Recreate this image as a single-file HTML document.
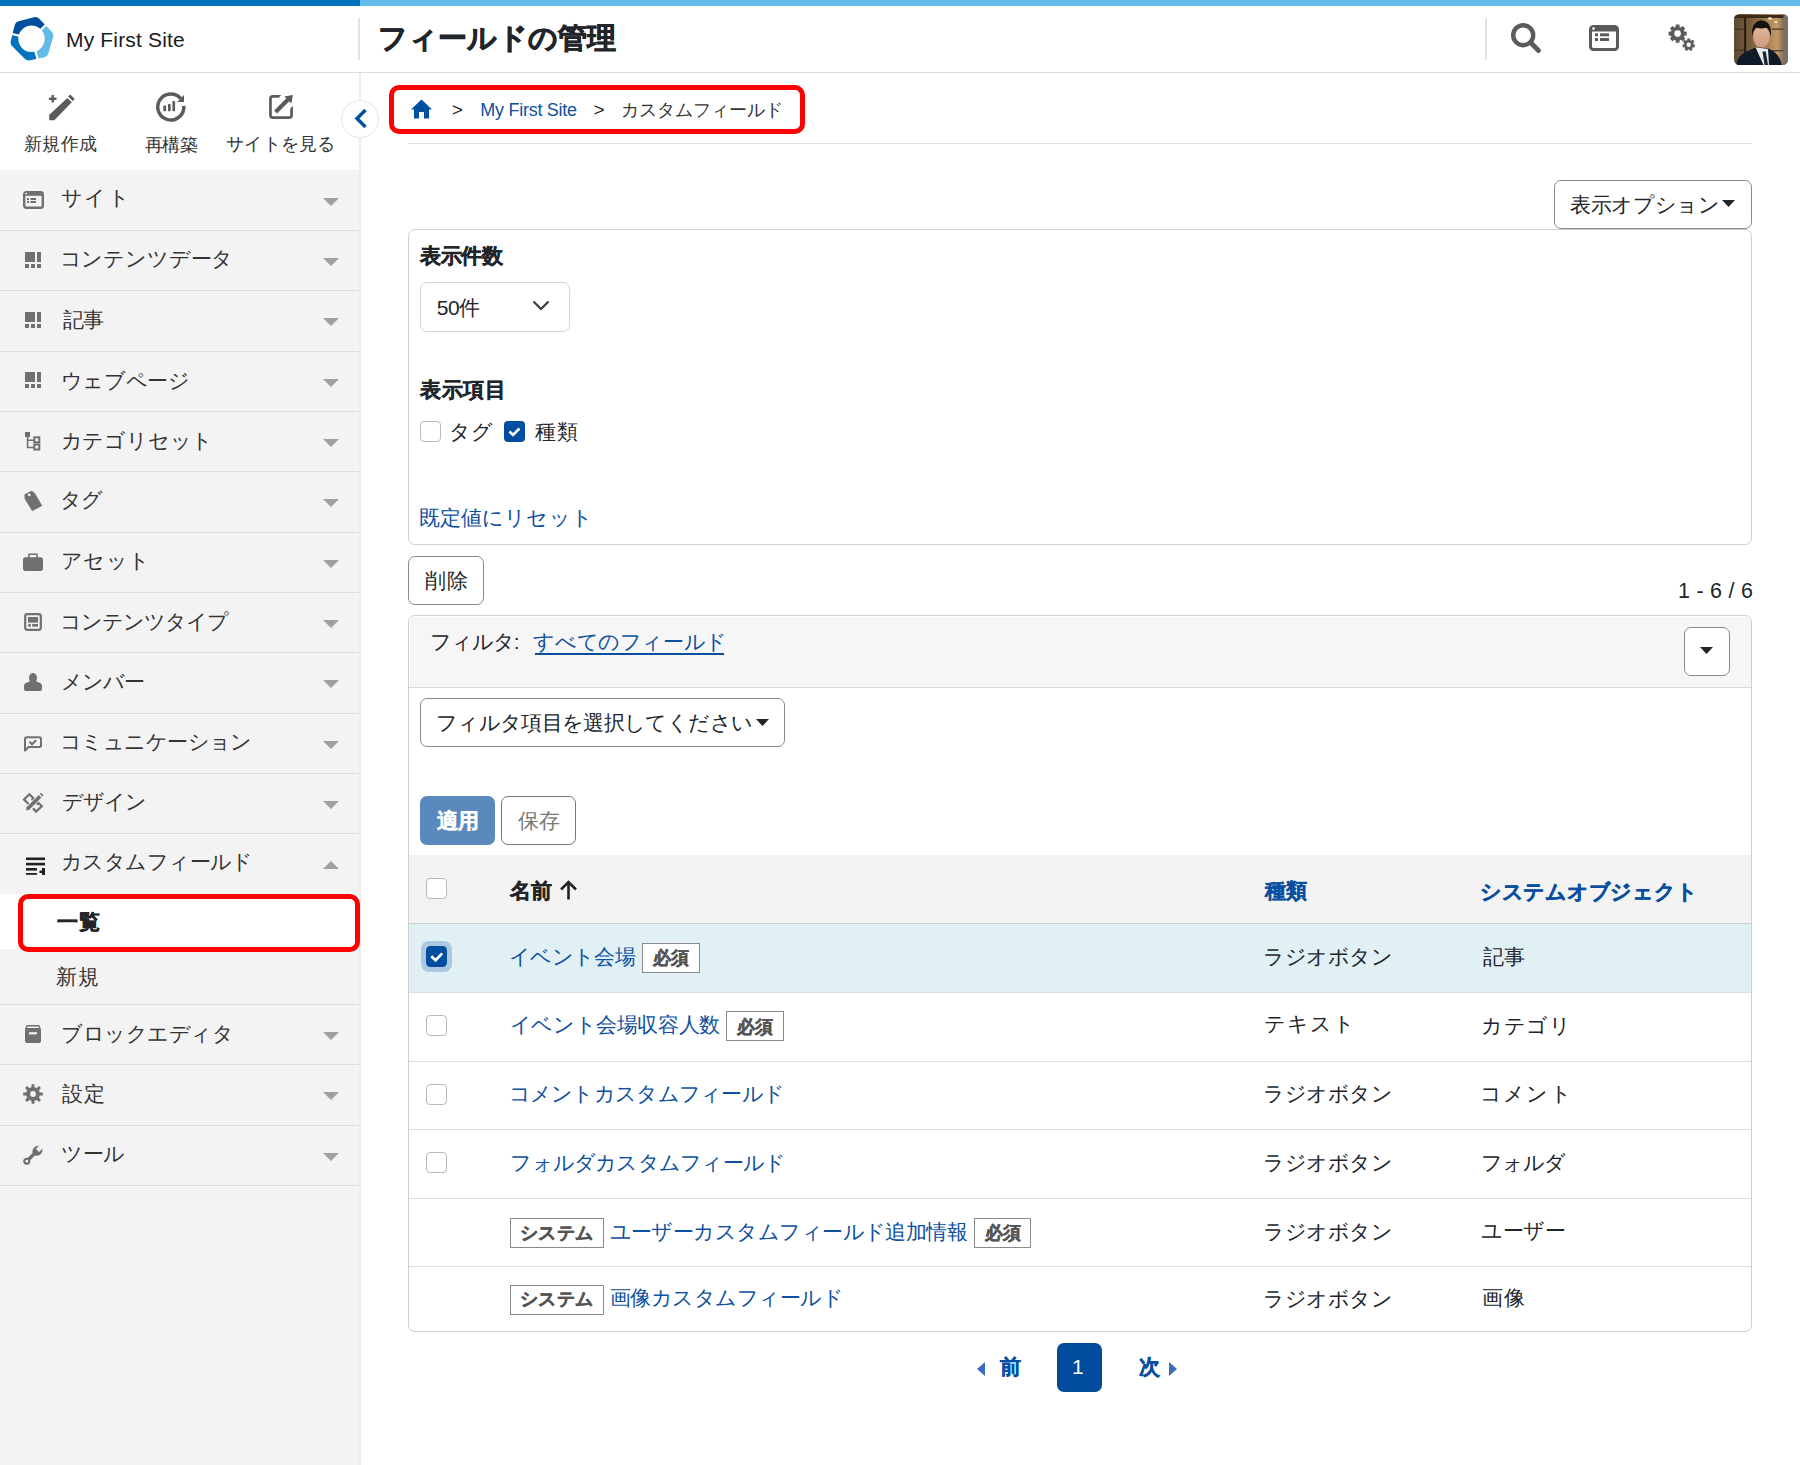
<!DOCTYPE html>
<html lang="ja"><head><meta charset="utf-8"><title>フィールドの管理</title>
<style>
html,body{margin:0;padding:0;}
body{width:1800px;height:1465px;overflow:hidden;position:relative;background:#fff;font-family:"Liberation Sans", sans-serif;}
.t{position:absolute;white-space:nowrap;}
.b{position:absolute;}
svg.b{overflow:visible;}
</style></head><body>
<div class="b" style="left:0px;top:0px;width:360px;height:6px;background:#0071bb"></div>
<div class="b" style="left:360px;top:0px;width:1440px;height:6px;background:#62bbe8"></div>
<svg class="b" style="left:0px;top:0px" width="60" height="70" viewBox="0 0 60 70"><defs><clipPath id="w1"><path d="M31.50,38.80 L-7.31,29.12 L-4.99,22.42 L-1.53,16.24 L2.97,10.76 L8.37,6.17 L14.49,2.60 L21.15,0.16 L28.13,-1.06 L35.22,-1.03 L42.19,0.25 L48.83,2.75 L54.92,6.37 L60.27,11.01 Z"/></clipPath><clipPath id="w2"><path d="M31.50,38.80 L60.27,11.01 L64.56,16.29 L67.90,22.21 L70.18,28.62 L71.35,35.31 L71.36,42.11 L70.23,48.82 L67.97,55.23 L64.66,61.17 L60.39,66.46 L55.29,70.95 L49.50,74.52 L43.19,77.05 Z"/></clipPath><clipPath id="w3"><path d="M31.50,38.80 L43.19,77.05 L36.32,78.51 L29.29,78.74 L22.33,77.74 L15.66,75.53 L9.47,72.19 L3.97,67.81 L-0.69,62.55 L-4.35,56.54 L-6.90,49.99 L-8.27,43.10 L-8.41,36.07 L-7.31,29.12 Z"/></clipPath></defs>
<path d="M12.26,46.26 Q10,44 10.78,40.90 L14.72,25.10 Q15.5,22 18.60,21.21 L33.90,17.29 Q37,16.5 39.23,18.80 L51.77,31.70 Q54,34 53.11,37.07 L48.39,53.43 Q47.5,56.5 44.37,57.19 L30.13,60.31 Q27,61 24.74,58.74 Z M44.7,38.8 A13.2,13.2 0 1,0 18.3,38.8 A13.2,13.2 0 1,0 44.7,38.8 Z" fill="#004ea0" fill-rule="evenodd" clip-path="url(#w1)"/>
<path d="M12.26,46.26 Q10,44 10.78,40.90 L14.72,25.10 Q15.5,22 18.60,21.21 L33.90,17.29 Q37,16.5 39.23,18.80 L51.77,31.70 Q54,34 53.11,37.07 L48.39,53.43 Q47.5,56.5 44.37,57.19 L30.13,60.31 Q27,61 24.74,58.74 Z M44.7,38.8 A13.2,13.2 0 1,0 18.3,38.8 A13.2,13.2 0 1,0 44.7,38.8 Z" fill="#62bbe9" fill-rule="evenodd" clip-path="url(#w2)"/>
<path d="M12.26,46.26 Q10,44 10.78,40.90 L14.72,25.10 Q15.5,22 18.60,21.21 L33.90,17.29 Q37,16.5 39.23,18.80 L51.77,31.70 Q54,34 53.11,37.07 L48.39,53.43 Q47.5,56.5 44.37,57.19 L30.13,60.31 Q27,61 24.74,58.74 Z M44.7,38.8 A13.2,13.2 0 1,0 18.3,38.8 A13.2,13.2 0 1,0 44.7,38.8 Z" fill="#0073bf" fill-rule="evenodd" clip-path="url(#w3)"/><line x1="38.69" y1="31.85" x2="50.20" y2="20.74" stroke="#fff" stroke-width="2.2"/><line x1="34.42" y1="48.36" x2="39.10" y2="63.66" stroke="#fff" stroke-width="2.2"/><line x1="21.80" y1="36.38" x2="6.27" y2="32.51" stroke="#fff" stroke-width="2.2"/></svg>
<div class="b" style="left:358px;top:18px;width:1.5px;height:42px;background:#e3e3e3"></div>
<div class="b" style="left:1485px;top:18px;width:2px;height:42px;background:#e3e3e3"></div>
<svg class="b" style="left:1510px;top:22px" width="33" height="33" viewBox="0 0 33 33"><circle cx="13.2" cy="13.2" r="10" fill="none" stroke="#5b5b5b" stroke-width="4.4"/><line x1="20.5" y1="20.5" x2="28.5" y2="28.5" stroke="#5b5b5b" stroke-width="4.8" stroke-linecap="round"/></svg>
<svg class="b" style="left:1589px;top:25px" width="30" height="26" viewBox="0 0 30 26"><rect x="1.5" y="1.5" width="27" height="23" rx="3" fill="none" stroke="#5b5b5b" stroke-width="3"/><rect x="1.5" y="1.5" width="27" height="5" fill="#5b5b5b"/><circle cx="4.5" cy="3.6" r="1.3" fill="#fff"/><rect x="6" y="8.3" width="3" height="3" fill="#5b5b5b"/><rect x="11" y="8.3" width="9" height="3" fill="#5b5b5b"/><rect x="6" y="13" width="3" height="3" fill="#5b5b5b"/><rect x="11" y="13" width="9" height="3" fill="#5b5b5b"/></svg>
<svg class="b" style="left:1666px;top:22px" width="32" height="32" viewBox="0 0 32 32"><path d="M9.82,2.57 L13.38,2.57 L13.70,4.92 L14.84,5.39 L16.72,3.96 L19.24,6.48 L17.81,8.36 L18.28,9.50 L20.63,9.82 L20.63,13.38 L18.28,13.70 L17.81,14.84 L19.24,16.72 L16.72,19.24 L14.84,17.81 L13.70,18.28 L13.38,20.63 L9.82,20.63 L9.50,18.28 L8.36,17.81 L6.48,19.24 L3.96,16.72 L5.39,14.84 L4.92,13.70 L2.57,13.38 L2.57,9.82 L4.92,9.50 L5.39,8.36 L3.96,6.48 L6.48,3.96 L8.36,5.39 L9.50,4.92 Z M14.90,11.6 A3.3,3.3 0 1,0 8.30,11.6 A3.3,3.3 0 1,0 14.90,11.6 Z" fill="#5b5b5b" fill-rule="evenodd"/><path d="M21.33,16.45 L24.07,16.45 L24.29,18.17 L25.25,18.64 L26.74,17.73 L28.44,19.87 L27.23,21.11 L27.47,22.16 L29.10,22.76 L28.49,25.42 L26.76,25.25 L26.09,26.09 L26.65,27.74 L24.18,28.93 L23.24,27.47 L22.16,27.47 L21.22,28.93 L18.75,27.74 L19.31,26.09 L18.64,25.25 L16.91,25.42 L16.30,22.76 L17.93,22.16 L18.17,21.11 L16.96,19.87 L18.66,17.73 L20.15,18.64 L21.11,18.17 Z M24.90,22.7 A2.2,2.2 0 1,0 20.50,22.7 A2.2,2.2 0 1,0 24.90,22.7 Z" fill="#5b5b5b" fill-rule="evenodd"/></svg>
<svg class="b" style="left:1734px;top:14px" width="54" height="51" viewBox="0 0 54 51"><defs><clipPath id="av"><rect x="0" y="0" width="54" height="51" rx="5.5"/></clipPath>
<linearGradient id="bg" x1="0" x2="1" y1="0" y2="0"><stop offset="0" stop-color="#5e4a34"/><stop offset="0.3" stop-color="#7a5c3c"/><stop offset="0.62" stop-color="#a98155"/><stop offset="0.8" stop-color="#c49a6a"/><stop offset="0.9" stop-color="#8e7658"/><stop offset="1" stop-color="#6f675f"/></linearGradient>
<linearGradient id="fc" x1="0" x2="0" y1="0" y2="1"><stop offset="0" stop-color="#e2b89c"/><stop offset="1" stop-color="#cf9a80"/></linearGradient></defs>
<g clip-path="url(#av)"><rect width="54" height="51" fill="url(#bg)"/>
<rect x="10" y="3" width="2.2" height="40" fill="#2c2015"/><rect x="0" y="1" width="54" height="3" fill="#3a2b1c"/>
<rect x="0" y="14.5" width="10" height="1.4" fill="#4a3825"/><rect x="38" y="14.5" width="12" height="1.4" fill="#5a4630"/>
<rect x="0" y="35.5" width="10" height="1.4" fill="#4a3825"/><rect x="38" y="36" width="12" height="1.4" fill="#5a4630"/>
<rect x="49.5" y="0" width="4.5" height="51" fill="#7a7066"/>
<ellipse cx="36" cy="4.5" rx="2" ry="1.3" fill="#f4e6c8"/><ellipse cx="42" cy="8" rx="1.6" ry="1.1" fill="#f4e6c8"/>
<ellipse cx="27.3" cy="22.5" rx="8.2" ry="11.2" fill="url(#fc)"/>
<path d="M18.3,23 Q16.5,7.5 27.5,6.3 Q38.5,7.5 36.8,23 Q36,15 32,13.8 Q27.5,15.2 22.5,13.8 Q19,15.5 18.3,23 Z" fill="#15120f"/>
<path d="M2,51 Q4,40 15,36.5 L22,33 L34,34.5 Q45,38 48,51 Z" fill="#111a29"/>
<path d="M21.5,33.2 L29.5,51 L35,51 L34,35 Z" fill="#e8ecef"/>
<path d="M28.5,37.5 L30.5,51 L34,51 L31.8,37.5 Z" fill="#1c2533"/></g></svg>
<div class="b" style="left:0px;top:72px;width:1800px;height:1px;background:#dddddd"></div>
<div class="b" style="left:0px;top:73px;width:359px;height:97px;background:#ffffff"></div>
<div class="b" style="left:0px;top:170px;width:359px;height:1295px;background:#f3f3f3"></div>
<div class="b" style="left:359px;top:73px;width:2px;height:1392px;background:#ececec"></div>
<svg class="b" style="left:47px;top:94px" width="30" height="28" viewBox="0 0 30 28"><path d="M2.2,21 L20.3,3.9 L24.8,8.3 L7.3,26.2 L2.2,26.2 Z" fill="#5b5b5b"/><path d="M21.1,2.6 L23.2,0.6 L27.8,5.1 L25.8,7.1 Z" fill="#5b5b5b"/><rect x="4.5" y="1" width="2.4" height="7.5" fill="#5b5b5b"/><rect x="1.9" y="3.6" width="7.6" height="2.4" fill="#5b5b5b"/></svg>
<svg class="b" style="left:155px;top:91px" width="32" height="32" viewBox="0 0 32 32"><path d="M28.8,14.9 A13.05,13.05 0 1,1 25.8,7.6" fill="none" stroke="#5b5b5b" stroke-width="3.5"/><path d="M22.2,11.1 L29,11.1 L29,4 Z" fill="#5b5b5b"/><rect x="8.3" y="14.4" width="2.8" height="5.9" rx="0.8" fill="#5b5b5b"/><rect x="13" y="13.1" width="2.7" height="7.2" rx="0.8" fill="#5b5b5b"/><rect x="17.4" y="10" width="2.7" height="10.3" rx="0.8" fill="#5b5b5b"/></svg>
<svg class="b" style="left:268px;top:94px" width="27" height="27" viewBox="0 0 27 27"><path d="M20,2.35 L4.8,2.35 Q2.45,2.35 2.45,4.7 L2.45,21.2 Q2.45,23.55 4.8,23.55 L21.2,23.55 Q23.55,23.55 23.55,21.2 L23.55,5" fill="none" stroke="#5b5b5b" stroke-width="2.7"/><path d="M15,-1 L28,-1 L28,8.8 L18,18.8 L7.5,7.5 Z" fill="#fff"/><path d="M7.6,17.9 L20.6,4.9" stroke="#5b5b5b" stroke-width="4.2"/><path d="M24.9,1.1 L23.4,9.6 L16.4,2.6 Z" fill="#5b5b5b"/></svg>
<div class="b" style="left:0px;top:230px;width:359px;height:1px;background:#dcdcdc"></div>
<div class="b" style="left:0px;top:290px;width:359px;height:1px;background:#dcdcdc"></div>
<div class="b" style="left:0px;top:351px;width:359px;height:1px;background:#dcdcdc"></div>
<div class="b" style="left:0px;top:411px;width:359px;height:1px;background:#dcdcdc"></div>
<div class="b" style="left:0px;top:471px;width:359px;height:1px;background:#dcdcdc"></div>
<div class="b" style="left:0px;top:532px;width:359px;height:1px;background:#dcdcdc"></div>
<div class="b" style="left:0px;top:592px;width:359px;height:1px;background:#dcdcdc"></div>
<div class="b" style="left:0px;top:652px;width:359px;height:1px;background:#dcdcdc"></div>
<div class="b" style="left:0px;top:713px;width:359px;height:1px;background:#dcdcdc"></div>
<div class="b" style="left:0px;top:773px;width:359px;height:1px;background:#dcdcdc"></div>
<div class="b" style="left:0px;top:833px;width:359px;height:1px;background:#dcdcdc"></div>
<div class="b" style="left:0px;top:1004px;width:359px;height:1px;background:#dcdcdc"></div>
<div class="b" style="left:0px;top:1064px;width:359px;height:1px;background:#dcdcdc"></div>
<div class="b" style="left:0px;top:1125px;width:359px;height:1px;background:#dcdcdc"></div>
<div class="b" style="left:0px;top:1185px;width:359px;height:1px;background:#dcdcdc"></div>
<svg class="b" style="left:23px;top:191px" width="21" height="18" viewBox="0 0 21 18"><rect x="1.2" y="1.2" width="18.6" height="15.6" rx="2" fill="none" stroke="#707070" stroke-width="2.4"/><rect x="1.2" y="1.2" width="18.6" height="3.6" fill="#707070"/><circle cx="3.2" cy="2.6" r="0.9" fill="#fff"/><rect x="4" y="7" width="2" height="2" fill="#707070"/><rect x="7.5" y="7" width="5.5" height="2" fill="#707070"/><rect x="4" y="10" width="2" height="2" fill="#707070"/><rect x="7.5" y="10" width="5.5" height="2" fill="#707070"/></svg>
<svg class="b" style="left:25px;top:252px" width="16" height="16" viewBox="0 0 16 16"><rect x="0" y="0" width="10" height="10" fill="#707070"/><rect x="12" y="0" width="4" height="10" fill="#707070"/><rect x="0" y="12" width="4" height="4" fill="#707070"/><rect x="6" y="12" width="4" height="4" fill="#707070"/><rect x="12" y="12" width="4" height="4" fill="#707070"/></svg>
<svg class="b" style="left:25px;top:312px" width="16" height="16" viewBox="0 0 16 16"><rect x="0" y="0" width="10" height="10" fill="#707070"/><rect x="12" y="0" width="4" height="10" fill="#707070"/><rect x="0" y="12" width="4" height="4" fill="#707070"/><rect x="6" y="12" width="4" height="4" fill="#707070"/><rect x="12" y="12" width="4" height="4" fill="#707070"/></svg>
<svg class="b" style="left:25px;top:372px" width="16" height="16" viewBox="0 0 16 16"><rect x="0" y="0" width="10" height="10" fill="#707070"/><rect x="12" y="0" width="4" height="10" fill="#707070"/><rect x="0" y="12" width="4" height="4" fill="#707070"/><rect x="6" y="12" width="4" height="4" fill="#707070"/><rect x="12" y="12" width="4" height="4" fill="#707070"/></svg>
<svg class="b" style="left:25px;top:432px" width="15" height="18" viewBox="0 0 15 18"><rect x="0" y="0" width="5" height="5" fill="#707070"/><path d="M2.6,4 L2.6,15.5 L9,15.5 M2.6,8.3 L9,8.3" fill="none" stroke="#707070" stroke-width="1.6"/><rect x="9.3" y="5.3" width="5" height="5" fill="none" stroke="#707070" stroke-width="2"/><rect x="9.3" y="12.5" width="5" height="5" fill="none" stroke="#707070" stroke-width="2"/></svg>
<svg class="b" style="left:24px;top:491px" width="19" height="21" viewBox="0 0 19 21"><path d="M0.8,3.6 L7.2,0.2 Q7.8,0 8.4,0.4 L10.6,2.2 L17.9,14.7 L8.3,19.8 L1,7.8 Z" fill="#707070" stroke="#707070" stroke-width="0.6" stroke-linejoin="round"/><circle cx="5.2" cy="3.9" r="1.3" fill="#f3f3f3"/></svg>
<svg class="b" style="left:23px;top:553px" width="20" height="18" viewBox="0 0 20 18"><rect x="0" y="4.3" width="20" height="13.7" rx="2.2" fill="#707070"/><path d="M6,5 L6,1.2 L14,1.2 L14,5" fill="none" stroke="#707070" stroke-width="1.6"/></svg>
<svg class="b" style="left:24px;top:613px" width="18" height="18" viewBox="0 0 18 18"><rect x="1.2" y="1.2" width="15.6" height="15.6" rx="2" fill="none" stroke="#707070" stroke-width="2.2"/><rect x="4" y="4" width="10" height="5.6" fill="#707070"/><circle cx="5.5" cy="12.3" r="1.5" fill="#707070"/><rect x="8.2" y="11" width="5.8" height="2.6" fill="#707070"/></svg>
<svg class="b" style="left:24px;top:673px" width="18" height="18" viewBox="0 0 18 18"><ellipse cx="9" cy="5" rx="4" ry="5" fill="#707070"/><path d="M0,13 Q0,10.5 3,9.5 L6.5,8 L11.5,8 L15,9.5 Q18,10.5 18,13 L18,16 Q18,18 16,18 L2,18 Q0,18 0,16 Z" fill="#707070"/></svg>
<svg class="b" style="left:24px;top:736px" width="18" height="16" viewBox="0 0 18 16"><path d="M1,14.5 L1,3 Q1,1.2 3,1.2 L15,1.2 Q17,1.2 17,3 L17,9.5 Q17,11 15,11 L4.5,11 Z" fill="none" stroke="#707070" stroke-width="2" stroke-linejoin="round"/><path d="M5.5,5.8 L8,8.3 L12.2,4.2" fill="none" stroke="#707070" stroke-width="2"/></svg>
<svg class="b" style="left:23px;top:793px" width="20" height="20" viewBox="0 0 20 20"><path d="M5.5,11 L1,6.5 L6.4,1.2 L10.6,5.4 L8.6,7.3" fill="none" stroke="#707070" stroke-width="2.2"/><path d="M10,15.2 L13,18.6 L18.8,13.2 L15.2,9.8 L13.5,11.6" fill="none" stroke="#707070" stroke-width="2.2"/><path d="M3.2,17.5 L3.6,14.2 L15.8,2 L18.4,4.6 L6.2,16.8 Z" fill="#707070" stroke="#f3f3f3" stroke-width="1.4" paint-order="stroke"/><path d="M16.8,1 L18,-0.2 L20.6,2.4 L19.4,3.6 Z" fill="#707070"/></svg>
<svg class="b" style="left:26px;top:857px" width="19" height="18" viewBox="0 0 19 18"><rect x="0" y="0.5" width="19" height="2.6" fill="#222"/><rect x="0" y="5.8" width="19" height="2.6" fill="#222"/><rect x="0" y="11" width="11" height="2.6" fill="#222"/><rect x="0" y="16" width="11" height="1.8" fill="#222"/><rect x="16" y="11" width="3" height="7" fill="#222"/><rect x="13.5" y="13.5" width="3" height="2.5" fill="#222"/></svg>
<svg class="b" style="left:25px;top:1025px" width="16" height="18" viewBox="0 0 16 18"><path d="M2.2,0.8 L13.8,0.8 L15.2,3.8 L0.8,3.8 Z" fill="none" stroke="#707070" stroke-width="1.4"/><rect x="0" y="3.8" width="16" height="14.2" rx="2" fill="#707070"/><rect x="4" y="7.2" width="8" height="2.2" fill="#f3f3f3"/></svg>
<svg class="b" style="left:23px;top:1084px" width="20" height="20" viewBox="0 0 20 20"><path d="M8.61,0.20 L11.39,0.20 L11.53,3.17 L13.74,4.09 L15.94,2.08 L17.92,4.06 L15.91,6.26 L16.83,8.47 L19.80,8.61 L19.80,11.39 L16.83,11.53 L15.91,13.74 L17.92,15.94 L15.94,17.92 L13.74,15.91 L11.53,16.83 L11.39,19.80 L8.61,19.80 L8.47,16.83 L6.26,15.91 L4.06,17.92 L2.08,15.94 L4.09,13.74 L3.17,11.53 L0.20,11.39 L0.20,8.61 L3.17,8.47 L4.09,6.26 L2.08,4.06 L4.06,2.08 L6.26,4.09 L8.47,3.17 Z M12.90,10 A2.9,2.9 0 1,0 7.10,10 A2.9,2.9 0 1,0 12.90,10 Z" fill="#707070" fill-rule="evenodd"/></svg>
<svg class="b" style="left:23px;top:1145px" width="20" height="20" viewBox="0 0 20 20"><path d="M3.5,16.5 L12,8" stroke="#707070" stroke-width="3.2" stroke-linecap="round"/><circle cx="3.8" cy="16.2" r="3.5" fill="#707070"/><circle cx="3.8" cy="16.2" r="1.4" fill="#f3f3f3"/><path d="M9.5,7.5 A6,6 0 0,1 16,0.8 L13,4 L16,7 L19.5,3.8 A6,6 0 0,1 12,10.5 Z" fill="#707070"/></svg>
<svg class="b" style="left:323px;top:198px" width="16" height="9" viewBox="0 0 16 9"><path d="M0,0 L16,0 L8,8 Z" fill="#a0a0a0"/></svg>
<svg class="b" style="left:323px;top:258px" width="16" height="9" viewBox="0 0 16 9"><path d="M0,0 L16,0 L8,8 Z" fill="#a0a0a0"/></svg>
<svg class="b" style="left:323px;top:318px" width="16" height="9" viewBox="0 0 16 9"><path d="M0,0 L16,0 L8,8 Z" fill="#a0a0a0"/></svg>
<svg class="b" style="left:323px;top:379px" width="16" height="9" viewBox="0 0 16 9"><path d="M0,0 L16,0 L8,8 Z" fill="#a0a0a0"/></svg>
<svg class="b" style="left:323px;top:439px" width="16" height="9" viewBox="0 0 16 9"><path d="M0,0 L16,0 L8,8 Z" fill="#a0a0a0"/></svg>
<svg class="b" style="left:323px;top:499px" width="16" height="9" viewBox="0 0 16 9"><path d="M0,0 L16,0 L8,8 Z" fill="#a0a0a0"/></svg>
<svg class="b" style="left:323px;top:560px" width="16" height="9" viewBox="0 0 16 9"><path d="M0,0 L16,0 L8,8 Z" fill="#a0a0a0"/></svg>
<svg class="b" style="left:323px;top:620px" width="16" height="9" viewBox="0 0 16 9"><path d="M0,0 L16,0 L8,8 Z" fill="#a0a0a0"/></svg>
<svg class="b" style="left:323px;top:680px" width="16" height="9" viewBox="0 0 16 9"><path d="M0,0 L16,0 L8,8 Z" fill="#a0a0a0"/></svg>
<svg class="b" style="left:323px;top:741px" width="16" height="9" viewBox="0 0 16 9"><path d="M0,0 L16,0 L8,8 Z" fill="#a0a0a0"/></svg>
<svg class="b" style="left:323px;top:801px" width="16" height="9" viewBox="0 0 16 9"><path d="M0,0 L16,0 L8,8 Z" fill="#a0a0a0"/></svg>
<svg class="b" style="left:323px;top:861px" width="16" height="9" viewBox="0 0 16 9"><path d="M0,8 L8,0 L16,8 Z" fill="#a0a0a0"/></svg>
<svg class="b" style="left:323px;top:1032px" width="16" height="9" viewBox="0 0 16 9"><path d="M0,0 L16,0 L8,8 Z" fill="#a0a0a0"/></svg>
<svg class="b" style="left:323px;top:1092px" width="16" height="9" viewBox="0 0 16 9"><path d="M0,0 L16,0 L8,8 Z" fill="#a0a0a0"/></svg>
<svg class="b" style="left:323px;top:1153px" width="16" height="9" viewBox="0 0 16 9"><path d="M0,0 L16,0 L8,8 Z" fill="#a0a0a0"/></svg>
<div class="b" style="left:0px;top:894px;width:359px;height:55px;background:#ffffff"></div>
<div class="b" style="left:18px;top:894px;width:342px;height:58px;border:5px solid #ff0000;border-radius:10px;box-sizing:border-box"></div>
<div class="b" style="left:341px;top:100px;width:38px;height:38px;background:#fff;border:1.5px solid #e6e6e6;border-radius:50%;box-sizing:border-box"></div>
<svg class="b" style="left:353px;top:108px" width="16" height="21" viewBox="0 0 16 21"><path d="M12.5,2 L4,10.5 L12.5,19" fill="none" stroke="#004ea0" stroke-width="3.4"/></svg>
<svg class="b" style="left:410px;top:99px" width="23" height="21" viewBox="0 0 23 21"><path d="M11.5,0.5 L22,10.5 L19,10.5 L19,19.5 L14,19.5 L14,13 L9,13 L9,19.5 L4,19.5 L4,10.5 L1,10.5 Z" fill="#004ea0"/></svg>
<div class="b" style="left:389px;top:85px;width:416px;height:49px;border:5px solid #ff0000;border-radius:10px;box-sizing:border-box"></div>
<div class="b" style="left:408px;top:143px;width:1344px;height:1px;background:#e0e0e0"></div>
<div class="b" style="left:408px;top:229px;width:1344px;height:316px;border:1.5px solid #cfcfcf;border-radius:7px;box-sizing:border-box"></div>
<div class="b" style="left:1554px;top:180px;width:198px;height:49px;border:1.5px solid #8a8a8a;border-radius:7px;box-sizing:border-box;background:#fff"></div>
<svg class="b" style="left:1722px;top:200px" width="14" height="8" viewBox="0 0 14 8"><path d="M0,0 L13,0 L6.5,7 Z" fill="#212529"/></svg>
<div class="b" style="left:420px;top:282px;width:150px;height:50px;border:1.5px solid #ced4da;border-radius:7px;box-sizing:border-box;background:#fff"></div>
<svg class="b" style="left:532px;top:300px" width="18" height="12" viewBox="0 0 18 12"><path d="M1.5,1.5 L9,9 L16.5,1.5" fill="none" stroke="#343a40" stroke-width="2.2"/></svg>
<div class="b" style="left:420px;top:421px;width:21px;height:21px;border:1.5px solid #b9b9b9;border-radius:4px;box-sizing:border-box;background:#fff"></div>
<div class="b" style="left:504px;top:421px;width:21px;height:21px;background:#004ea0;border-radius:4px"></div>
<svg class="b" style="left:504px;top:421px" width="21" height="21" viewBox="0 0 21 21"><path d="M5.5,10.5 L9,14 L15.5,7.5" fill="none" stroke="#fff" stroke-width="2.6"/></svg>
<div class="b" style="left:408px;top:556px;width:76px;height:49px;border:1.5px solid #8a8a8a;border-radius:7px;box-sizing:border-box;background:#fff"></div>
<div class="b" style="left:408px;top:615px;width:1344px;height:717px;border:1.5px solid #cfcfcf;border-radius:7px;box-sizing:border-box;"></div>
<div class="b" style="left:409.5px;top:616.5px;width:1341px;height:71px;background:#f6f6f6;border-top-left-radius:6px;border-top-right-radius:6px"></div>
<div class="b" style="left:409px;top:687px;width:1342px;height:1px;background:#d8d8d8"></div>
<div class="b" style="left:535px;top:653px;width:189px;height:2px;background:#0a4f9f"></div>
<div class="b" style="left:1684px;top:627px;width:46px;height:49px;border:1.5px solid #8a8a8a;border-radius:7px;box-sizing:border-box;background:#fff"></div>
<svg class="b" style="left:1700px;top:647px" width="14" height="8" viewBox="0 0 14 8"><path d="M0,0 L13,0 L6.5,7 Z" fill="#212529"/></svg>
<div class="b" style="left:420px;top:698px;width:365px;height:49px;border:1.5px solid #8a8a8a;border-radius:7px;box-sizing:border-box;background:#fff"></div>
<svg class="b" style="left:756px;top:719px" width="14" height="8" viewBox="0 0 14 8"><path d="M0,0 L13,0 L6.5,7 Z" fill="#212529"/></svg>
<div class="b" style="left:420px;top:796px;width:75px;height:49px;background:#5a89be;border-radius:7px"></div>
<div class="b" style="left:501px;top:796px;width:75px;height:49px;border:1.5px solid #777;border-radius:7px;box-sizing:border-box;background:#fff"></div>
<div class="b" style="left:409px;top:855px;width:1342px;height:68px;background:#f3f3f3"></div>
<div class="b" style="left:409px;top:923px;width:1342px;height:1.5px;background:#cfcfcf"></div>
<div class="b" style="left:426px;top:878px;width:21px;height:21px;border:1.5px solid #b9b9b9;border-radius:4px;box-sizing:border-box;background:#fff"></div>
<svg class="b" style="left:559px;top:880px" width="19" height="20" viewBox="0 0 19 20"><path d="M9.5,19.5 L9.5,2.5 M2,9.5 L9.5,2 L17,9.5" fill="none" stroke="#212529" stroke-width="2.6"/></svg>
<div class="b" style="left:409px;top:924px;width:1342px;height:68px;background:#e1f0f5"></div>
<div class="b" style="left:409px;top:992px;width:1342px;height:1px;background:#dedede"></div>
<div class="b" style="left:421px;top:941px;width:31px;height:31px;background:#abc8e0;border-radius:8px"></div>
<div class="b" style="left:426px;top:946px;width:21px;height:21px;background:#004ea0;border-radius:4.5px"></div>
<svg class="b" style="left:426px;top:946px" width="21" height="21" viewBox="0 0 21 21"><path d="M5.3,10.2 L9.6,14.3 L16.2,7.4" fill="none" stroke="#fff" stroke-width="2.7"/></svg>
<div class="b" style="left:409px;top:1061px;width:1342px;height:1px;background:#dedede"></div>
<div class="b" style="left:426px;top:1015px;width:21px;height:21px;border:1.5px solid #b9b9b9;border-radius:4px;box-sizing:border-box;background:#fff"></div>
<div class="b" style="left:409px;top:1129px;width:1342px;height:1px;background:#dedede"></div>
<div class="b" style="left:426px;top:1084px;width:21px;height:21px;border:1.5px solid #b9b9b9;border-radius:4px;box-sizing:border-box;background:#fff"></div>
<div class="b" style="left:409px;top:1198px;width:1342px;height:1px;background:#dedede"></div>
<div class="b" style="left:426px;top:1152px;width:21px;height:21px;border:1.5px solid #b9b9b9;border-radius:4px;box-sizing:border-box;background:#fff"></div>
<div class="b" style="left:409px;top:1266px;width:1342px;height:1px;background:#dedede"></div>
<div class="b" style="left:642px;top:943px;width:58px;height:30px;border:1.5px solid #8a8a8a;box-sizing:border-box;background:#fff"></div>
<div class="b" style="left:726px;top:1011px;width:58px;height:30px;border:1.5px solid #8a8a8a;box-sizing:border-box;background:#fff"></div>
<div class="b" style="left:973.5px;top:1218px;width:57.5px;height:30px;border:1.5px solid #8a8a8a;box-sizing:border-box;background:#fff"></div>
<div class="b" style="left:510px;top:1218px;width:94px;height:30px;border:1.5px solid #8a8a8a;box-sizing:border-box;background:#fff"></div>
<div class="b" style="left:510px;top:1284.5px;width:94px;height:30px;border:1.5px solid #8a8a8a;box-sizing:border-box;background:#fff"></div>
<svg class="b" style="left:976px;top:1362px" width="10" height="15" viewBox="0 0 10 15"><path d="M9,0 L9,14 L1,7 Z" fill="#3a6fb5"/></svg>
<div class="b" style="left:1057px;top:1343px;width:45px;height:49px;background:#004b9b;border-radius:7px"></div>
<svg class="b" style="left:1168px;top:1362px" width="10" height="15" viewBox="0 0 10 15"><path d="M1,0 L1,14 L9,7 Z" fill="#3a6fb5"/></svg>
<div class="t" style="left:66.0px;top:28.7px;font-size:21px;line-height:21px;color:#1a1a1a;font-weight:normal;letter-spacing:0.17px">My First Site</div>
<div class="t" style="left:378.0px;top:24.1px;font-size:29px;line-height:29px;color:#212529;font-weight:bold;letter-spacing:0.14px;-webkit-text-stroke:0.7px #212529">フィールドの管理</div>
<div class="t" style="left:24.0px;top:135.0px;font-size:18px;line-height:18px;color:#333;font-weight:normal;letter-spacing:0.33px">新規作成</div>
<div class="t" style="left:144.7px;top:135.5px;font-size:18px;line-height:18px;color:#333;font-weight:normal;letter-spacing:-0.35px">再構築</div>
<div class="t" style="left:226.3px;top:135.0px;font-size:18px;line-height:18px;color:#333;font-weight:normal;letter-spacing:0.2px">サイトを見る</div>
<div class="t" style="left:61.0px;top:187.0px;font-size:21px;line-height:21px;color:#333;font-weight:normal;letter-spacing:1.35px">サイト</div>
<div class="t" style="left:59.5px;top:247.5px;font-size:21px;line-height:21px;color:#333;font-weight:normal;letter-spacing:-0.16px">コンテンツデータ</div>
<div class="t" style="left:62.5px;top:308.5px;font-size:21px;line-height:21px;color:#333;font-weight:normal;letter-spacing:-0.5px">記事</div>
<div class="t" style="left:60.5px;top:370.0px;font-size:21px;line-height:21px;color:#333;font-weight:normal;letter-spacing:-0.28px">ウェブページ</div>
<div class="t" style="left:60.5px;top:429.5px;font-size:21px;line-height:21px;color:#333;font-weight:normal;letter-spacing:-0.18px">カテゴリセット</div>
<div class="t" style="left:59.5px;top:489.0px;font-size:21px;line-height:21px;color:#333;font-weight:normal;letter-spacing:-0.2px">タグ</div>
<div class="t" style="left:60.5px;top:549.5px;font-size:21px;line-height:21px;color:#333;font-weight:normal;letter-spacing:0.6px">アセット</div>
<div class="t" style="left:59.5px;top:611.0px;font-size:21px;line-height:21px;color:#333;font-weight:normal;letter-spacing:-0.9px">コンテンツタイプ</div>
<div class="t" style="left:60.5px;top:670.5px;font-size:21px;line-height:21px;color:#333;font-weight:normal;letter-spacing:-0.9px">メンバー</div>
<div class="t" style="left:60.0px;top:731.0px;font-size:21px;line-height:21px;color:#333;font-weight:normal;letter-spacing:-0.57px">コミュニケーション</div>
<div class="t" style="left:61.5px;top:791.0px;font-size:21px;line-height:21px;color:#333;font-weight:normal;letter-spacing:-0.77px">デザイン</div>
<div class="t" style="left:61.0px;top:850.5px;font-size:21px;line-height:21px;color:#333;font-weight:normal;letter-spacing:-0.57px">カスタムフィールド</div>
<div class="t" style="left:61.0px;top:1022.5px;font-size:21px;line-height:21px;color:#333;font-weight:normal;letter-spacing:-0.49px">ブロックエディタ</div>
<div class="t" style="left:62.0px;top:1082.5px;font-size:21px;line-height:21px;color:#333;font-weight:normal;letter-spacing:0.7px">設定</div>
<div class="t" style="left:61.0px;top:1142.5px;font-size:21px;line-height:21px;color:#333;font-weight:normal;letter-spacing:-0.5px">ツール</div>
<div class="t" style="left:57.0px;top:912.0px;font-size:20.5px;line-height:20.5px;color:#212529;font-weight:bold;letter-spacing:0.7px;-webkit-text-stroke:0.4px #212529">一覧</div>
<div class="t" style="left:55.8px;top:966.8px;font-size:20.5px;line-height:20.5px;color:#333;font-weight:normal;letter-spacing:1.7px">新規</div>
<div class="t" style="left:451.8px;top:100.0px;font-size:19px;line-height:19px;color:#222;font-weight:normal;letter-spacing:0.0px">&gt;</div>
<div class="t" style="left:480.3px;top:101.1px;font-size:18px;line-height:18px;color:#0d50a0;font-weight:normal;letter-spacing:-0.27px">My First Site</div>
<div class="t" style="left:593.4px;top:100.0px;font-size:19px;line-height:19px;color:#222;font-weight:normal;letter-spacing:0.0px">&gt;</div>
<div class="t" style="left:620.8px;top:100.8px;font-size:18px;line-height:18px;color:#333;font-weight:normal;letter-spacing:0.03px">カスタムフィールド</div>
<div class="t" style="left:1570.0px;top:193.5px;font-size:21px;line-height:21px;color:#212529;font-weight:normal;letter-spacing:-0.33px">表示オプション</div>
<div class="t" style="left:420.0px;top:246.3px;font-size:20.5px;line-height:20.5px;color:#212529;font-weight:bold;letter-spacing:-0.4px;-webkit-text-stroke:0.4px #212529">表示件数</div>
<div class="t" style="left:436.8px;top:296.5px;font-size:21px;line-height:21px;color:#212529;font-weight:normal;letter-spacing:-0.4px">50件</div>
<div class="t" style="left:420.0px;top:380.0px;font-size:20.5px;line-height:20.5px;color:#212529;font-weight:bold;letter-spacing:0.67px;-webkit-text-stroke:0.4px #212529">表示項目</div>
<div class="t" style="left:448.7px;top:420.5px;font-size:21px;line-height:21px;color:#212529;font-weight:normal;letter-spacing:0.3px">タグ</div>
<div class="t" style="left:535.0px;top:421.0px;font-size:21px;line-height:21px;color:#212529;font-weight:normal;letter-spacing:0.7px">種類</div>
<div class="t" style="left:419.0px;top:506.8px;font-size:21px;line-height:21px;color:#0d50a0;font-weight:normal;letter-spacing:0.1px">既定値にリセット</div>
<div class="t" style="left:424.6px;top:569.9px;font-size:21px;line-height:21px;color:#212529;font-weight:normal;letter-spacing:1.1px">削除</div>
<div class="t" style="left:1678.0px;top:580.6px;font-size:21.5px;line-height:21.5px;color:#212529;font-weight:normal;letter-spacing:0.25px">1 - 6 / 6</div>
<div class="t" style="left:430.0px;top:631.2px;font-size:21px;line-height:21px;color:#212529;font-weight:normal;letter-spacing:-1.05px">フィルタ:</div>
<div class="t" style="left:533.4px;top:630.5px;font-size:21px;line-height:21px;color:#0d50a0;font-weight:normal;letter-spacing:-0.39px">すべてのフィールド</div>
<div class="t" style="left:435.8px;top:712.0px;font-size:21px;line-height:21px;color:#212529;font-weight:normal;letter-spacing:-0.63px">フィルタ項目を選択してください</div>
<div class="t" style="left:436.7px;top:811.4px;font-size:20.5px;line-height:20.5px;color:#fff;font-weight:bold;letter-spacing:0.3px;-webkit-text-stroke:0.4px #fff">適用</div>
<div class="t" style="left:517.5px;top:809.9px;font-size:21px;line-height:21px;color:#777;font-weight:normal;letter-spacing:0.5px">保存</div>
<div class="t" style="left:510.0px;top:880.5px;font-size:20.5px;line-height:20.5px;color:#212529;font-weight:bold;letter-spacing:0.0px;-webkit-text-stroke:0.4px #212529">名前</div>
<div class="t" style="left:1265.3px;top:881.0px;font-size:20.5px;line-height:20.5px;color:#0a4f9f;font-weight:bold;letter-spacing:-0.3px;-webkit-text-stroke:0.4px #0a4f9f">種類</div>
<div class="t" style="left:1480.0px;top:881.5px;font-size:20.5px;line-height:20.5px;color:#0a4f9f;font-weight:bold;letter-spacing:-0.26px;-webkit-text-stroke:0.4px #0a4f9f">システムオブジェクト</div>
<div class="t" style="left:508.8px;top:945.6px;font-size:21px;line-height:21px;color:#0d50a0;font-weight:normal;letter-spacing:-0.62px">イベント会場</div>
<div class="t" style="left:653.0px;top:949.3px;font-size:18px;line-height:18px;color:#555;font-weight:bold;letter-spacing:0.0px;-webkit-text-stroke:0.4px #555">必須</div>
<div class="t" style="left:1263.3px;top:945.5px;font-size:21px;line-height:21px;color:#212529;font-weight:normal;letter-spacing:-0.5px">ラジオボタン</div>
<div class="t" style="left:1483.0px;top:946.0px;font-size:21px;line-height:21px;color:#212529;font-weight:normal;letter-spacing:-0.4px">記事</div>
<div class="t" style="left:509.6px;top:1014.1px;font-size:21px;line-height:21px;color:#0d50a0;font-weight:normal;letter-spacing:-0.36px">イベント会場収容人数</div>
<div class="t" style="left:737.0px;top:1017.5px;font-size:18px;line-height:18px;color:#555;font-weight:bold;letter-spacing:0.0px;-webkit-text-stroke:0.4px #555">必須</div>
<div class="t" style="left:1264.3px;top:1013.0px;font-size:21px;line-height:21px;color:#212529;font-weight:normal;letter-spacing:0.87px">テキスト</div>
<div class="t" style="left:1481.0px;top:1014.5px;font-size:21px;line-height:21px;color:#212529;font-weight:normal;letter-spacing:0.6px">カテゴリ</div>
<div class="t" style="left:508.6px;top:1082.5px;font-size:21px;line-height:21px;color:#0d50a0;font-weight:normal;letter-spacing:-0.72px">コメントカスタムフィールド</div>
<div class="t" style="left:1263.3px;top:1082.5px;font-size:21px;line-height:21px;color:#212529;font-weight:normal;letter-spacing:-0.5px">ラジオボタン</div>
<div class="t" style="left:1480.0px;top:1082.5px;font-size:21px;line-height:21px;color:#212529;font-weight:normal;letter-spacing:1.2px">コメント</div>
<div class="t" style="left:510.3px;top:1151.7px;font-size:21px;line-height:21px;color:#0d50a0;font-weight:normal;letter-spacing:-0.77px">フォルダカスタムフィールド</div>
<div class="t" style="left:1263.3px;top:1151.5px;font-size:21px;line-height:21px;color:#212529;font-weight:normal;letter-spacing:-0.5px">ラジオボタン</div>
<div class="t" style="left:1481.0px;top:1151.5px;font-size:21px;line-height:21px;color:#212529;font-weight:normal;letter-spacing:-1.07px">フォルダ</div>
<div class="t" style="left:519.8px;top:1223.8px;font-size:18px;line-height:18px;color:#555;font-weight:bold;letter-spacing:0.4px;-webkit-text-stroke:0.4px #555">システム</div>
<div class="t" style="left:609.6px;top:1221.0px;font-size:21px;line-height:21px;color:#0d50a0;font-weight:normal;letter-spacing:-0.55px">ユーザーカスタムフィールド追加情報</div>
<div class="t" style="left:984.5px;top:1224.3px;font-size:18px;line-height:18px;color:#555;font-weight:bold;letter-spacing:0.0px;-webkit-text-stroke:0.4px #555">必須</div>
<div class="t" style="left:1263.3px;top:1220.5px;font-size:21px;line-height:21px;color:#212529;font-weight:normal;letter-spacing:-0.5px">ラジオボタン</div>
<div class="t" style="left:1481.4px;top:1220.1px;font-size:21px;line-height:21px;color:#212529;font-weight:normal;letter-spacing:-0.47px">ユーザー</div>
<div class="t" style="left:519.8px;top:1290.0px;font-size:18px;line-height:18px;color:#555;font-weight:bold;letter-spacing:0.4px;-webkit-text-stroke:0.4px #555">システム</div>
<div class="t" style="left:609.6px;top:1287.2px;font-size:21px;line-height:21px;color:#0d50a0;font-weight:normal;letter-spacing:-0.49px">画像カスタムフィールド</div>
<div class="t" style="left:1263.3px;top:1287.7px;font-size:21px;line-height:21px;color:#212529;font-weight:normal;letter-spacing:-0.5px">ラジオボタン</div>
<div class="t" style="left:1482.0px;top:1287.3px;font-size:21px;line-height:21px;color:#212529;font-weight:normal;letter-spacing:0.8px">画像</div>
<div class="t" style="left:1000.0px;top:1357.3px;font-size:20.5px;line-height:20.5px;color:#0a4f9f;font-weight:bold;letter-spacing:0.0px;-webkit-text-stroke:0.4px #0a4f9f">前</div>
<div class="t" style="left:1072.0px;top:1356.0px;font-size:21px;line-height:21px;color:#fff;font-weight:normal;letter-spacing:0.0px">1</div>
<div class="t" style="left:1139.0px;top:1357.3px;font-size:20.5px;line-height:20.5px;color:#0a4f9f;font-weight:bold;letter-spacing:0.0px;-webkit-text-stroke:0.4px #0a4f9f">次</div>
</body></html>
